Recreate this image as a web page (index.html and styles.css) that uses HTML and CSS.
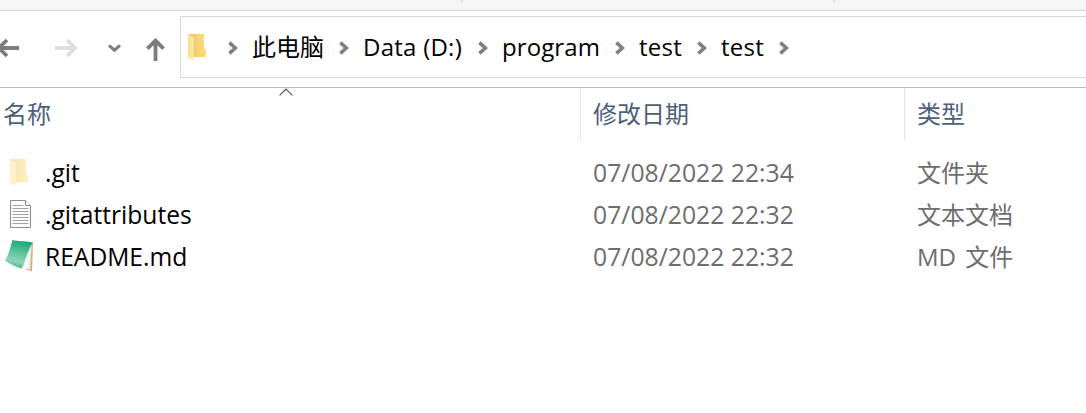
FILE: index.html
```html
<!DOCTYPE html>
<html lang="zh-CN">
<head>
<meta charset="utf-8">
<title>test</title>
<link rel="stylesheet" href="styles.css">
</head>
<body>
<svg class="defs" width="0" height="0" aria-hidden="true">
  <defs>
    <linearGradient id="gold" x1="0" x2="1"><stop offset="0" stop-color="#eac765"/><stop offset="1" stop-color="#ffdd7d"/></linearGradient>
    <linearGradient id="flap" x1="0" x2="1"><stop offset="0" stop-color="#ffe08a"/><stop offset="1" stop-color="#ffebad"/></linearGradient>
    <linearGradient id="green" x1=".6" y1="0" x2=".4" y2="1"><stop offset="0" stop-color="#12a873"/><stop offset=".35" stop-color="#4cbd93"/><stop offset=".75" stop-color="#8fd4b8"/><stop offset="1" stop-color="#45b88d"/></linearGradient>
    <linearGradient id="pages" x1="0" x2="1"><stop offset="0" stop-color="#dfe3e5"/><stop offset=".5" stop-color="#fff"/><stop offset="1" stop-color="#dfe0dc"/></linearGradient>
    <symbol id="folder" viewBox="0 0 18 27">
      <path fill="url(#gold)" d="M0 0h16v14l2 2v7H5z"/>
      <path fill="url(#flap)" d="M0 0l5.5 4v23L0 23.5z"/>
    </symbol>
    <symbol id="chevron" viewBox="0 0 10 14">
      <path d="M1.4 1.6L7.3 7l-5.9 5.4" fill="none" stroke="#808080" stroke-width="3.6"/>
    </symbol>
  </defs>
</svg>
<div class="ribbon"><i class="tick tick-a"></i><i class="tick tick-b"></i></div>
<nav class="toolbar">
  <div class="controls">
    <svg class="back" width="20" height="20" viewBox="0 0 20 20"><path d="M19 10H1M7 2l-8 8 8 8" fill="none" stroke="#7d7d7d" stroke-width="3.8"/></svg>
    <svg class="forward" width="23" height="20" viewBox="0 0 23 20"><path d="M0 10h20M12.2 2.2L20 10l-7.8 7.8" fill="none" stroke="#dedede" stroke-width="3.8"/></svg>
    <svg class="recent" width="13" height="9" viewBox="0 0 13 9"><path d="M1 1.4l5.5 4.8L12 1.4" fill="none" stroke="#7d7d7d" stroke-width="3"/></svg>
    <svg class="up" width="19" height="23" viewBox="0 0 19 23"><path d="M9.5 23V3M1.4 10.7l8.1-8.1 8.1 8.1" fill="none" stroke="#7d7d7d" stroke-width="3.8"/></svg>
  </div>
  <div class="address">
    <svg class="folder"><use href="#folder"/></svg>
    <svg class="chevron"><use href="#chevron"/></svg>
    <div class="crumb pc"><span>此电脑</span><svg class="chevron"><use href="#chevron"/></svg></div>
    <div class="crumb drive"><span>Data (D:)</span><svg class="chevron"><use href="#chevron"/></svg></div>
    <div class="crumb program"><span>program</span><svg class="chevron"><use href="#chevron"/></svg></div>
    <div class="crumb dir"><span>test</span><svg class="chevron"><use href="#chevron"/></svg></div>
    <div class="crumb dir"><span>test</span><svg class="chevron"><use href="#chevron"/></svg></div>
  </div>
</nav>
<main>
  <div class="grid header">
    <div class="h-name">名称<svg class="sort" width="14" height="8" viewBox="0 0 14 8"><path d="M.6 7.4L7 1l6.4 6.4" fill="none" stroke="#555" stroke-width="1.2"/></svg></div>
    <div class="h-cell">修改日期</div>
    <div class="h-cell">类型</div>
  </div>
  <div class="list">
    <div class="grid row">
      <div class="name"><svg class="folder faded"><use href="#folder"/></svg><span>.git</span></div>
      <div class="date">07/08/2022 22:34</div><div class="type">文件夹</div>
    </div>
    <div class="grid row">
      <div class="name"><svg class="doc" width="22" height="28" viewBox="0 0 22 28"><path d="M.5.5h15l5 5v22H.5z" fill="#fafafa" stroke="#8b8d8f"/><path d="M15.5.5v5h5" fill="#fff" stroke="#8b8d8f"/><path d="M2.5 5.5h11M2.500 8.5h16M2.500 11.5h16M2.500 14.5h16M2.500 17.5h16M2.500 20.5h16M2.500 23.5h16" stroke="#a2a5a7"/></svg><span>.gitattributes</span></div>
      <div class="date">07/08/2022 22:32</div><div class="type">文本文档</div>
    </div>
    <div class="grid row">
      <div class="name"><svg class="md" width="28" height="32" viewBox="0 0 28 32"><path d="M25 3l3 0-1 28.500-7-2.500z" fill="#cfae7a"/><path d="M24 4l2.700 1-1.400 24.500-9.500-1.500z" fill="url(#pages)"/><path d="M7.500 0C13 1.500 19 .8 28 2.400 23 8 21 21 16.500 28.500 10 26.500 5 24 0 20.500 4 14 5.500 7 7.500 0z" fill="url(#green)"/></svg><span>README.md</span></div>
      <div class="date">07/08/2022 22:32</div><div class="type md-type">MD 文件</div>
    </div>
  </div>
</main>
</body>
</html>
```
FILE: styles.css
```css
* { box-sizing: border-box; }
body {
  margin: 0;
  height: 413px;
  overflow: hidden;
  background: #fff;
  color: #000;
  font: 24px/42px "Open Sans", "Noto Sans CJK SC", sans-serif;
  white-space: nowrap;
}
svg { display: block; flex: none; }
.defs { position: absolute; }
.ribbon {
  display: flex;
  height: 11px;
  background: #f4f5f7;
  border-bottom: 1px solid #d9d9db;
}
.tick { width: 2px; height: 3px; background: #dfe0e3; }
.tick-a { margin-left: 461px; }
.tick-b { margin-left: 370px; }
.toolbar {
  display: flex;
  height: 77px;
  padding-top: 5px;
  border-bottom: 1px solid #bbb;
}
.controls { display: flex; align-items: center; width: 180px; height: 64px; }
.back { margin-right: 35px; }
.forward { margin-right: 30px; }
.recent { margin-right: 25px; }
.up { margin-top: 3px; }
.address {
  display: flex;
  align-items: center;
  flex: 1;
  height: 62px;
  padding-left: 7px;
  border: solid #d9d9d9;
  border-width: 1px 0 1px 1px;
}
.folder { width: 18px; height: 27px; }
.chevron { width: 10px; height: 14px; margin-top: 2px; }
.address > .folder { margin-right: 22px; }
.address > .chevron { margin-right: 14px; }
.crumb { display: flex; align-items: center; justify-content: space-between; }
.pc { width: 97px; margin-right: 14px; }
.drive { width: 125px; margin-right: 14px; letter-spacing: .25px; }
.program { width: 123px; margin-right: 14px; letter-spacing: .1px; }
.dir { width: 68px; margin-right: 14px; letter-spacing: .25px; }
.grid { display: grid; grid-template-columns: 580px 324px 1fr; }
.header { height: 51px; color: #4c607a; line-height: 52px; }
.h-name { position: relative; padding-left: 3px; }
.sort { position: absolute; left: 278.5px; top: 0; }
.h-cell { border-left: 1px solid #e2e2e2; padding-left: 12px; }
.list { padding-top: 13px; }
.row { height: 42px; }
.name { display: flex; align-items: center; padding-left: 10px; font-size: 24.6px; }
.name span { height: 42px; }
.faded { opacity: .48; margin: -1px 17px 0 0; }
.doc { margin: -2px 13px 0 0; }
.md { margin: -3px 12px 0 -5px; }
.date, .type { padding-left: 13px; color: #6d6d6d; }
.date { font-size: 24.75px; }
.md-type { word-spacing: 3px; }
```
